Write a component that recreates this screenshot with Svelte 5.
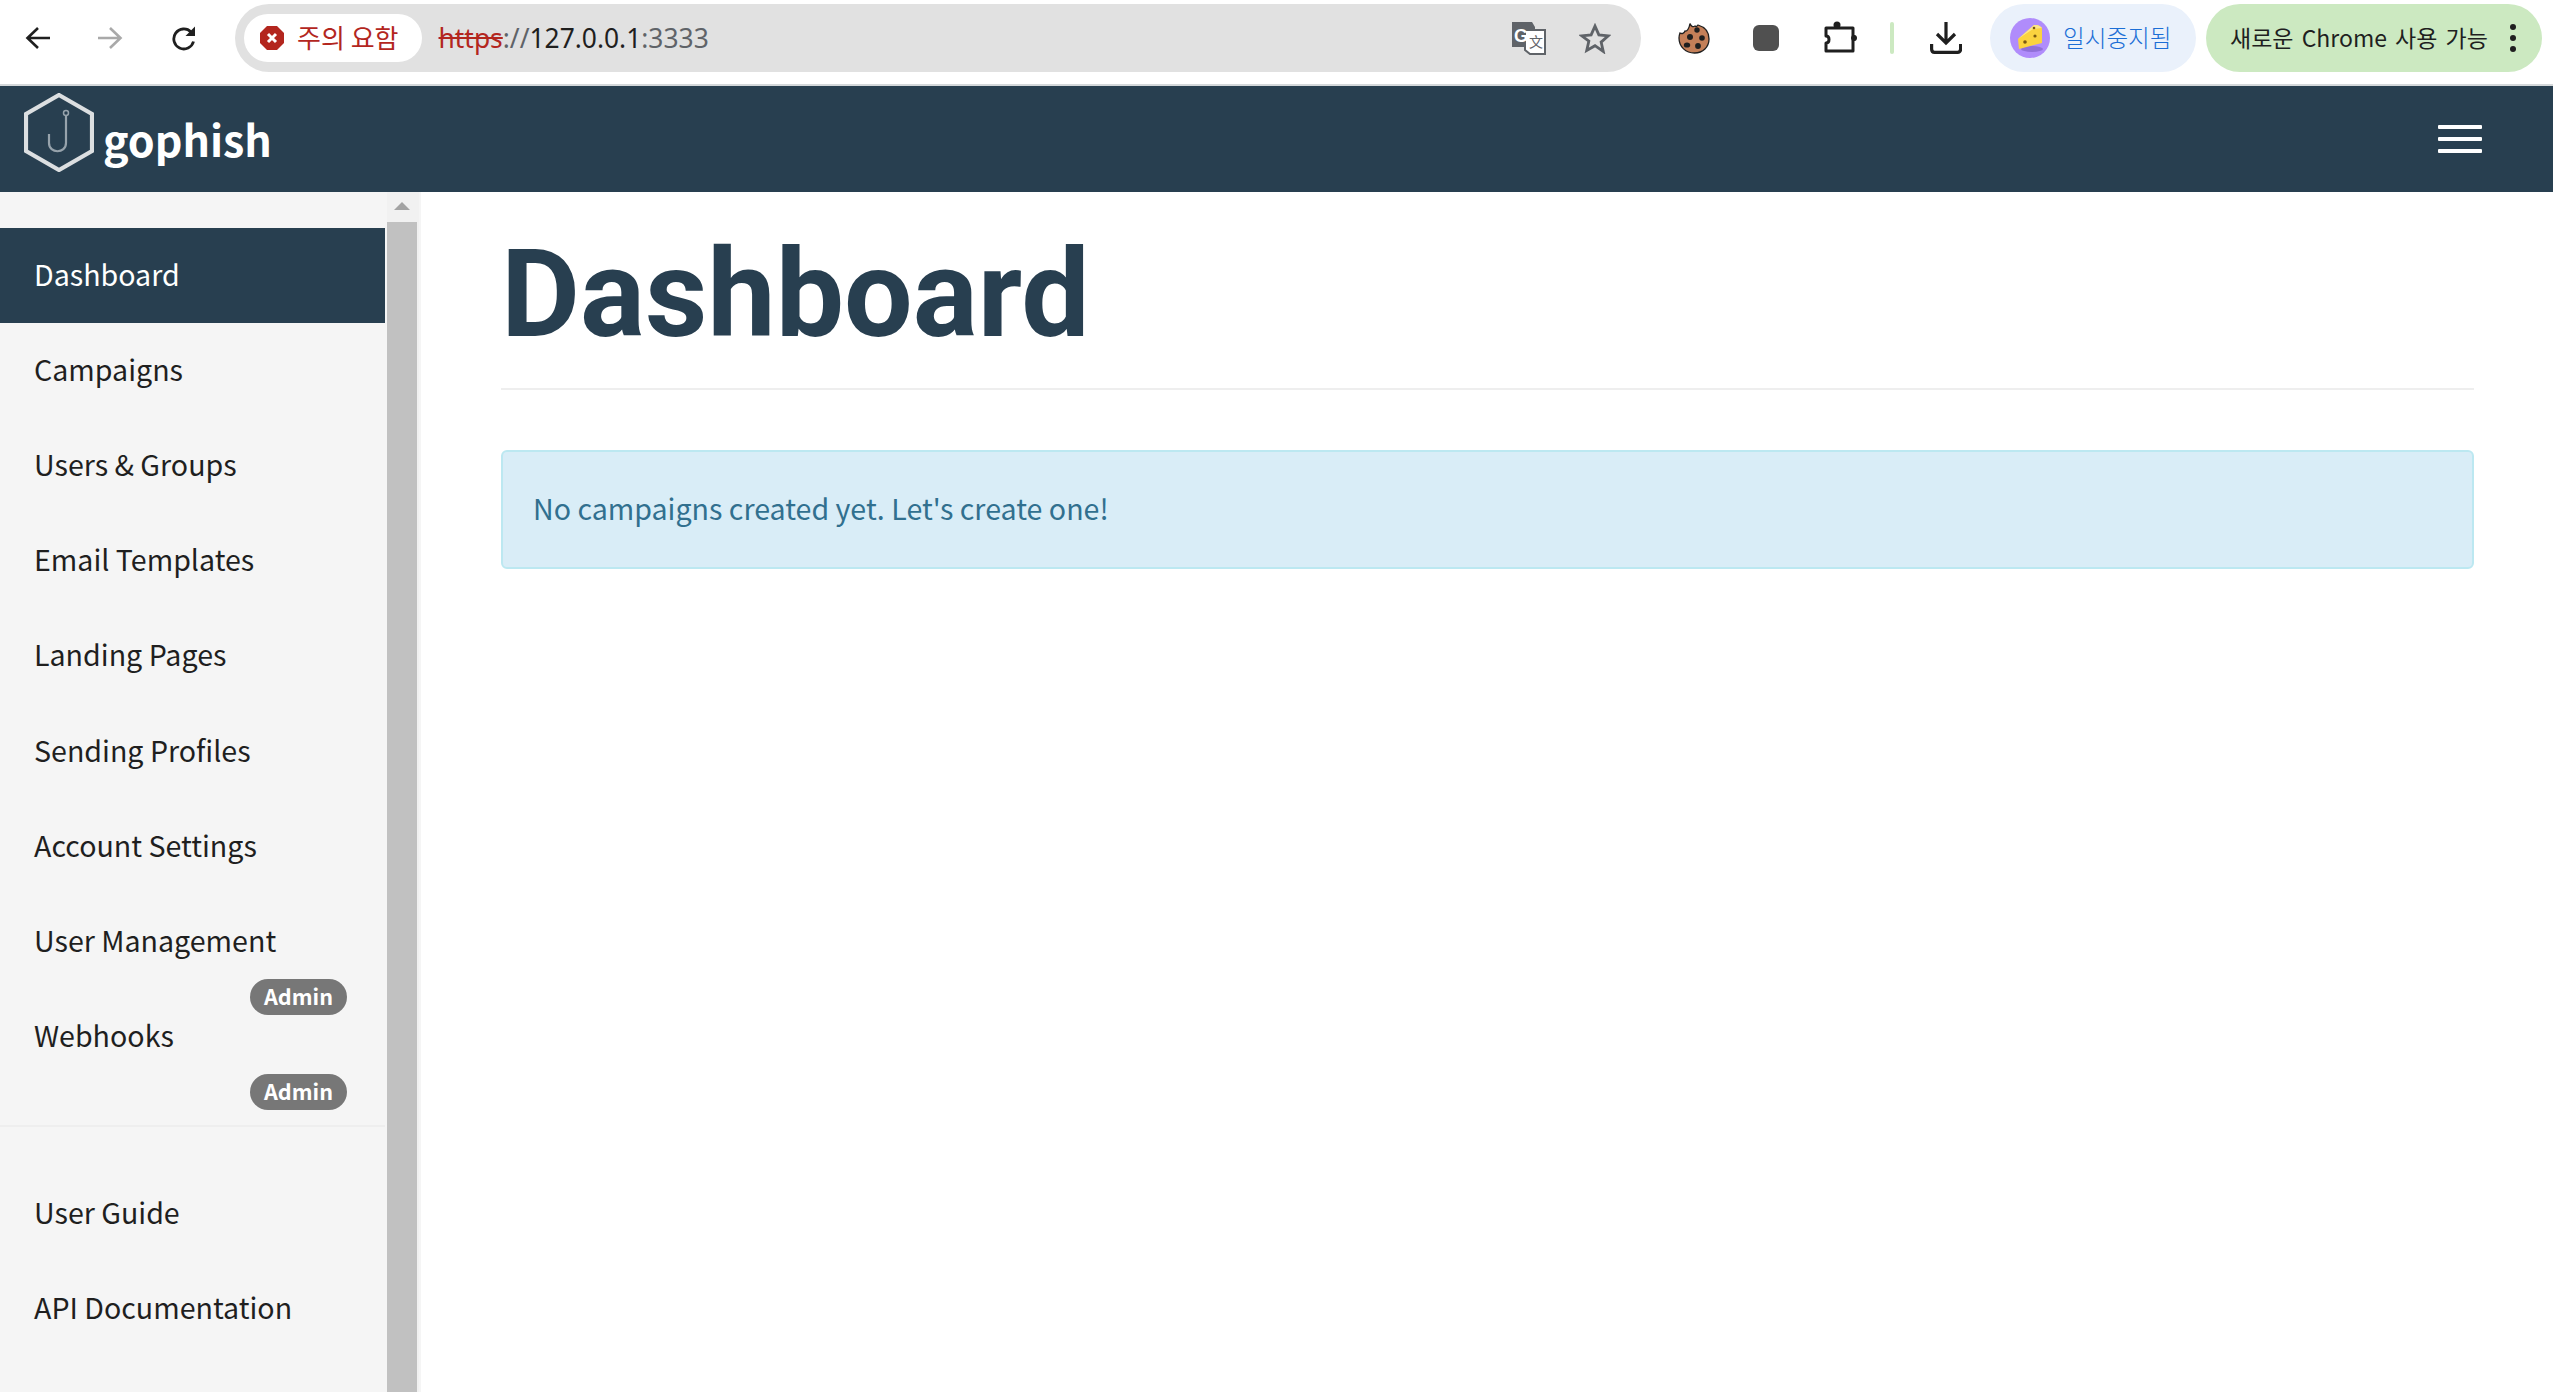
<script>
  const navItems = [
    { label: "Dashboard", active: true },
    { label: "Campaigns" },
    { label: "Users & Groups" },
    { label: "Email Templates" },
    { label: "Landing Pages" },
    { label: "Sending Profiles" },
    { label: "Account Settings" },
    { label: "User Management", admin: true },
    { label: "Webhooks", admin: true }
  ]
  const helpItems = ["User Guide", "API Documentation"]
</script>

<div class="window">
  <header class="toolbar">
    <div class="nav-buttons">
      <svg class="tb-back" width="26" height="24" viewBox="0 0 26 24" fill="none" stroke="#1f1f1f" stroke-width="2.6"><path d="M25 12H3M13 2 2.5 12 13 22" /></svg>
      <svg class="tb-forward" width="26" height="24" viewBox="0 0 26 24" fill="none" stroke="#a9a9a9" stroke-width="2.6"><path d="M1 12h22M13 2l10.5 10L13 22" /></svg>
      <svg class="tb-reload" width="26" height="25" viewBox="0 0 26 25" fill="none" stroke="#1f1f1f" stroke-width="2.8"><path d="M22.5 15.5A10 10 0 1 1 20 6" /><path d="M24 0.500v9.500h-9.500z" fill="#1f1f1f" stroke="none" /></svg>
    </div>
    <div class="omnibox">
      <div class="chip">
        <svg width="24" height="24" viewBox="0 0 24 24"><path d="M7 0h10l7 7v10l-7 7H7l-7-7V7z" fill="#b3261e" /><path d="M8 8l8 8M16 8l-8 8" stroke="#fff" stroke-width="3" /></svg>
        <span>주의 요함</span>
      </div>
      <div class="url"><s>https</s><span class="dim">://</span>127.0.0.1<span class="dim">:3333</span></div>
      <svg class="translate" width="34" height="34" viewBox="0 0 34 34">
        <path d="M0 1h20l3 5v20H0z" fill="#5f6368" />
        <path d="M13 9h20v24H18l-5-4z" fill="#fff" stroke="#5f6368" stroke-width="2" />
        <text x="2" y="21" class="tr-g">G</text>
        <text x="17" y="26" class="tr-x">文</text>
      </svg>
      <svg class="star" width="32" height="31" viewBox="0 0 24 23" fill="none" stroke="#5f6368" stroke-width="2.1"><path d="M12 2.200l2.900 6.600 7.100.7-5.400 4.700 1.600 7L12 16.900l-6.200 3.600 1.600-7L2 9.500l7.100-.7z" /></svg>
    </div>
    <svg class="cookie" width="32" height="32" viewBox="0 0 32 32">
      <path d="M12 1.500c1 3 3 3.800 5 2.500 1 1 2 .5 3-1C27 5 31 10 31 17c0 8-6 14-14.500 14C8 31 1 25 1 16c0-2 .2-3 1-5 2 1 4 .5 5-2 2 .5 4-2 5-7.500z" fill="#c47f58" stroke="#1f1f1f" stroke-width="1.300" />
      <circle cx="19" cy="8" r="2.700" fill="#1f1f1f" /><circle cx="12" cy="15" r="3" fill="#1f1f1f" /><circle cx="24" cy="16" r="2.800" fill="#1f1f1f" /><ellipse cx="9" cy="23" rx="3.200" ry="2.600" fill="#1f1f1f" /><circle cx="20" cy="24" r="2.900" fill="#1f1f1f" />
    </svg>
    <div class="stop-icon"></div>
    <svg class="puzzle" width="34" height="34" viewBox="0 0 34 34" fill="none" stroke="#1f1f1f" stroke-width="3"><path d="M3 7h27v8c2 0 2 4 0 4v11H3v-8c4 0 4-7 0-7z" stroke-linejoin="round" /><circle cx="14" cy="4" r="3.500" fill="#1f1f1f" stroke="none" /><circle cx="31" cy="17" r="3" fill="#1f1f1f" stroke="none" /></svg>
    <div class="tb-divider"></div>
    <svg class="download" width="32" height="32" viewBox="0 0 32 32" fill="none" stroke="#1f1f1f" stroke-width="3.200"><path d="M16 0v21M7 12l9 9 9-9" /><path d="M1.600 22v5c0 2 1 3.400 3 3.400h23c2 0 3-1.400 3-3.400v-5" /></svg>
    <div class="pause-pill">
      <svg width="40" height="40" viewBox="0 0 40 40">
        <circle cx="20" cy="20" r="20" fill="#b08cfb" />
        <ellipse cx="22" cy="31" rx="11" ry="3" fill="#9070d8" />
        <path d="M8 21 24 7c4-.5 7 1 8 3v15L9 31z" fill="#fbd33f" />
        <path d="M8 21 24 7c4-.5 7 1 8 3l-9 1z" fill="#fde68a" />
        <circle cx="15" cy="24" r="1.800" fill="#7a5a10" /><circle cx="25" cy="18" r="1.600" fill="#7a5a10" /><circle cx="24" cy="10" r="1.300" fill="#7a5a10" />
      </svg>
      <span>일시중지됨</span>
    </div>
    <div class="update-pill">
      <span>새로운 Chrome 사용 가능</span>
      <div class="dots"><i></i><i></i><i></i></div>
    </div>
  </header>

  <div class="navbar">
    <div class="brand">
      <svg width="70" height="79" viewBox="0 0 70 79" fill="none">
        <path d="M35 2 68 21v37L35 77 2 58V21z" stroke="#dcdfe1" stroke-width="4.200" />
        <circle cx="42" cy="20" r="2.500" stroke="#97a3ac" stroke-width="1.500" />
        <path d="M42 23v27c0 11-17 11-17 0v-9" stroke="#97a3ac" stroke-width="2.200" />
      </svg>
      <span>gophish</span>
    </div>
    <div class="burger"><i></i><i></i><i></i></div>
  </div>

  <div class="content">
    <aside class="sidebar">
      <nav class="menu">
        <ul class="primary">
          {#each navItems as item}
            <li class="item" class:active={item.active}>
              {item.label}
              {#if item.admin}<span class="badge">Admin</span>{/if}
            </li>
          {/each}
        </ul>
        <ul class="secondary">
          {#each helpItems as label}
            <li class="item">{label}</li>
          {/each}
        </ul>
      </nav>
      <div class="scrollbar">
        <div class="arrow"></div>
        <div class="thumb"></div>
      </div>
    </aside>
    <main class="main">
      <h1>Dashboard</h1>
      <div class="alert">No campaigns created yet. Let's create one!</div>
    </main>
  </div>
</div>

<style>
  :global(body) {
    margin: 0;
    background: #fff;
  }
  .window {
    display: flex;
    flex-direction: column;
    height: 1392px;
    overflow: hidden;
    font-family: "Noto Sans CJK KR", "Noto Sans", sans-serif;
  }
  .toolbar {
    display: flex;
    align-items: center;
    box-sizing: border-box;
    height: 86px;
    padding-bottom: 8px;
    border-bottom: 2px solid #d4d8da;
    flex: none;
  }
  .nav-buttons {
    display: flex;
    align-items: center;
    margin-left: 25px;
    width: 210px;
    gap: 46px;
  }
  .tb-reload {
    margin-left: 2px;
  }
  .omnibox {
    display: flex;
    align-items: center;
    width: 1406px;
    height: 68px;
    border-radius: 34px;
    background: #e1e1e1;
  }
  .chip {
    display: flex;
    align-items: center;
    gap: 13px;
    margin-left: 9px;
    padding: 0 23px 0 16px;
    height: 48px;
    border-radius: 24px;
    background: #fff;
    color: #b3261e;
    font-size: 26px;
    white-space: nowrap;
  }
  .chip span {
    position: relative;
    top: -2px;
  }
  .url {
    margin-left: 17px;
    font-family: "Noto Sans", sans-serif;
    font-size: 26.400px;
    color: #1f1f1f;
    white-space: nowrap;
    flex: 1;
  }
  .url s {
    color: #b3261e;
  }
  .dim {
    color: #5f6368;
  }
  .translate {
    margin-right: 33px;
  }
  .tr-g {
    font: 700 18px "Liberation Sans", sans-serif;
    fill: #fff;
  }
  .tr-x {
    font: 400 14px "Noto Sans CJK SC", sans-serif;
    fill: #5f6368;
  }
  .star {
    margin-right: 30px;
  }
  .cookie {
    margin-left: 37px;
  }
  .stop-icon {
    width: 26px;
    height: 26px;
    margin-left: 43px;
    border-radius: 6px;
    background: #505050;
  }
  .puzzle {
    margin-left: 44px;
  }
  .tb-divider {
    width: 4px;
    height: 32px;
    margin-left: 33px;
    border-radius: 2px;
    background: #cce9c1;
  }
  .download {
    margin-left: 36px;
  }
  .pause-pill {
    display: flex;
    align-items: center;
    gap: 13px;
    height: 68px;
    width: 206px;
    box-sizing: border-box;
    margin-left: 28px;
    padding-left: 20px;
    border-radius: 34px;
    background: #eaf1fb;
    color: #1b6ed6;
    font-size: 23.600px;
    font-weight: 300;
    white-space: nowrap;
  }
  .pause-pill span,
  .update-pill span {
    position: relative;
    top: -1px;
  }
  .update-pill {
    display: flex;
    align-items: center;
    height: 68px;
    width: 336px;
    box-sizing: border-box;
    margin-left: 10px;
    padding-left: 24px;
    border-radius: 34px;
    background: #cce9c1;
    color: #1f1f1f;
    font-size: 23px;
    word-spacing: 3px;
    white-space: nowrap;
  }
  .dots {
    display: flex;
    flex-direction: column;
    gap: 5px;
    margin-left: 22px;
  }
  .dots i {
    width: 6px;
    height: 6px;
    border-radius: 50%;
    background: #1f1f1f;
  }
  .navbar {
    display: flex;
    align-items: center;
    justify-content: space-between;
    height: 106px;
    flex: none;
    background: #283f50;
  }
  .brand {
    display: flex;
    align-items: flex-end;
    gap: 9px;
    margin-left: 24px;
    margin-top: -13px;
    color: #fff;
    font-size: 43px;
    font-weight: 700;
    line-height: 1;
  }
  .brand span {
    position: relative;
    top: -12px;
  }
  .burger {
    display: flex;
    flex-direction: column;
    gap: 8px;
    margin-right: 71px;
  }
  .burger i {
    width: 44px;
    height: 4px;
    border-radius: 1px;
    background: #fff;
  }
  .content {
    display: flex;
    flex: 1;
    min-height: 0;
  }
  .sidebar {
    display: flex;
    width: 421px;
    flex: none;
    background: #f5f5f5;
  }
  .menu {
    width: 385px;
    padding-top: 36px;
    flex: none;
  }
  ul {
    list-style: none;
    margin: 0;
    padding: 0;
  }
  .primary {
    padding-bottom: 40px;
    border-bottom: 2px solid #eeeeee;
    margin-bottom: 40px;
  }
  .item {
    position: relative;
    display: flex;
    align-items: center;
    box-sizing: border-box;
    height: 95.200px;
    padding: 0 0 5px 34px;
    font-size: 28.600px;
    color: #1f1f1f;
  }
  .active {
    background: #283f50;
    color: #fff;
  }
  .badge {
    position: absolute;
    right: 38px;
    bottom: -25.400px;
    width: 97px;
    height: 36px;
    border-radius: 18px;
    background: #777;
    color: #fff;
    font-size: 21.600px;
    font-weight: 700;
    line-height: 34px;
    text-align: center;
  }
  .scrollbar {
    display: flex;
    flex-direction: column;
    align-items: center;
    width: 32px;
    margin-left: 2px;
    background: #f1f1f1;
  }
  .arrow {
    height: 30px;
    width: 100%;
    position: relative;
  }
  .arrow::after {
    content: "";
    position: absolute;
    left: 7px;
    top: 10px;
    border-left: 8px solid transparent;
    border-right: 8px solid transparent;
    border-bottom: 8px solid #a3a3a3;
  }
  .thumb {
    flex: 1;
    width: 30px;
    background: #c1c1c1;
    align-self: flex-start;
  }
  .main {
    flex: 1;
    padding: 0 79px 0 80px;
    min-width: 0;
  }
  h1 {
    margin: 0;
    height: 198px;
    box-sizing: border-box;
    padding-top: 30px;
    border-bottom: 2px solid #eeeeee;
    font-family: Roboto, sans-serif;
    font-size: 121.600px;
    font-weight: 700;
    line-height: 146px;
    color: #283f50;
  }
  .alert {
    display: flex;
    align-items: center;
    box-sizing: border-box;
    height: 119px;
    margin-top: 60px;
    padding: 0 0 4px 30px;
    border: 2px solid #bce8f1;
    border-radius: 6px;
    background: #d9edf7;
    color: #31708f;
    font-size: 28.600px;
  }
</style>
